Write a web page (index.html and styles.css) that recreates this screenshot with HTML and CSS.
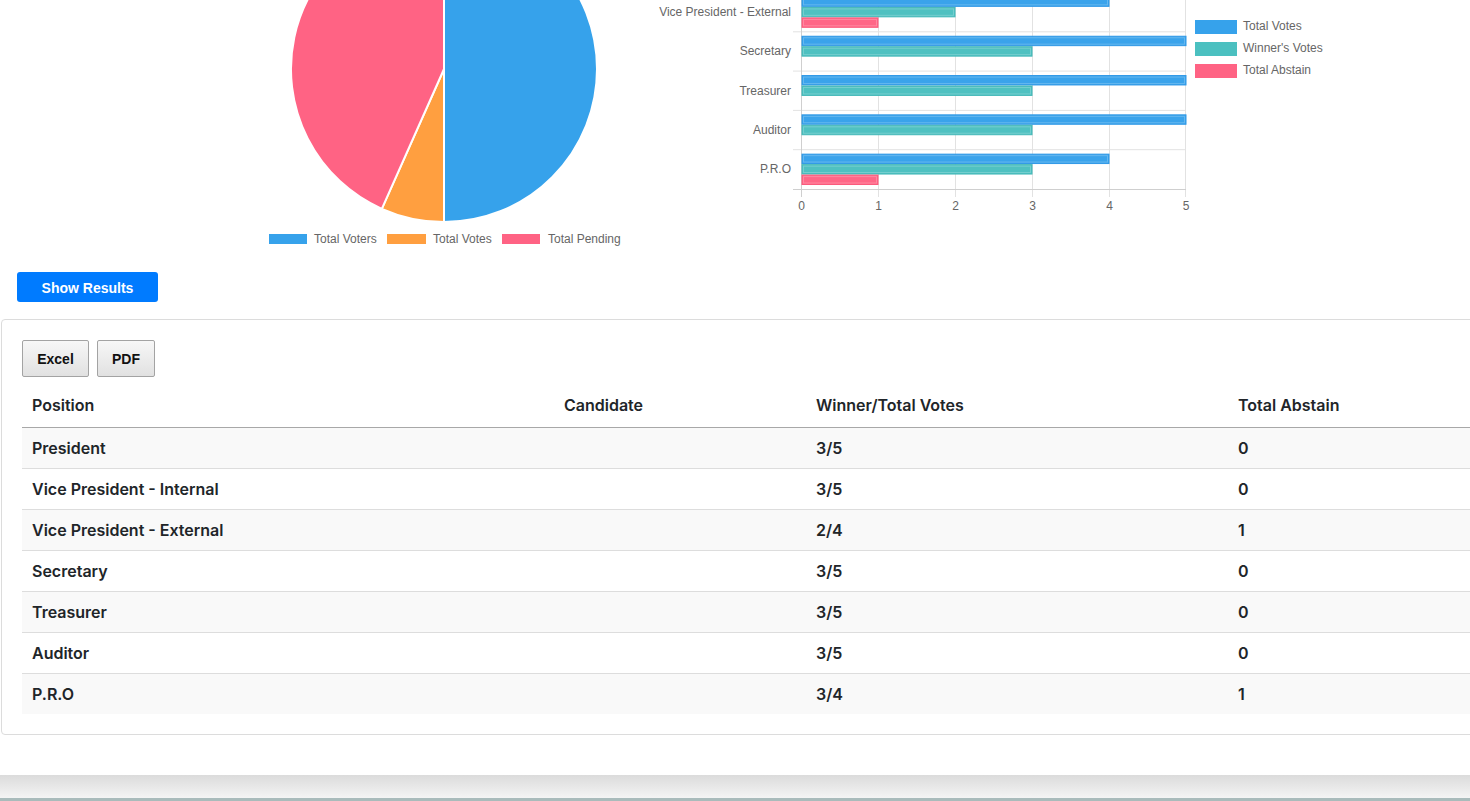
FILE: index.html
```html
<!DOCTYPE html>
<html lang="en">
<head>
<meta charset="utf-8">
<title>Election Results</title>
<link rel="stylesheet" href="styles.css">
</head>
<body>
<div class="page">
  <section class="charts">
    <svg class="pie-chart" width="620" height="350" viewBox="17 -100 620 350">
      <path class="slice slice-voters" d="M444,69 L444,-84 A153,153 0 0 1 444,222 Z"/>
      <path class="slice slice-votes" d="M444,69 L444,222 A153,153 0 0 1 381.8,208.8 Z"/>
      <path class="slice slice-pending" d="M444,69 L381.8,208.8 A153,153 0 0 1 444,-84 Z"/>
      <rect class="swatch-voters" x="269" y="234" width="38" height="10"/>
      <text class="chart-text" x="314" y="239">Total Voters</text>
      <rect class="swatch-votes" x="387" y="234" width="39" height="10"/>
      <text class="chart-text" x="433" y="239">Total Votes</text>
      <rect class="swatch-pending" x="502" y="234" width="38" height="10"/>
      <text class="chart-text" x="548" y="239">Total Pending</text>
    </svg>
    <svg class="bar-chart" width="833" height="350" viewBox="637 -100 833 350">
      <g class="grid">
        <line x1="793" y1="-86.1" x2="1186" y2="-86.1"/>
        <line x1="793" y1="-46.8" x2="1186" y2="-46.8"/>
        <line x1="793" y1="-7.5" x2="1186" y2="-7.5"/>
        <line x1="793" y1="31.8" x2="1186" y2="31.8"/>
        <line x1="793" y1="71.1" x2="1186" y2="71.1"/>
        <line x1="793" y1="110.4" x2="1186" y2="110.4"/>
        <line x1="793" y1="149.7" x2="1186" y2="149.7"/>
        <line x1="878.5" y1="-86.1" x2="878.5" y2="197"/>
        <line x1="955.5" y1="-86.1" x2="955.5" y2="197"/>
        <line x1="1032.5" y1="-86.1" x2="1032.5" y2="197"/>
        <line x1="1109.5" y1="-86.1" x2="1109.5" y2="197"/>
        <line x1="1185.5" y1="-86.1" x2="1185.5" y2="197"/>
      </g>
      <g class="axis">
        <line x1="801.5" y1="-86.1" x2="801.5" y2="197"/>
        <line x1="793" y1="189.5" x2="1186" y2="189.5"/>
      </g>
      <g class="bars">
        <rect class="bar-votes" x="802" y="-81.65" width="384" height="9.4"/>
        <rect class="bar-winner" x="802" y="-71.17" width="230" height="9.4"/>

        <rect class="bar-votes" x="802" y="-42.35" width="384" height="9.4"/>
        <rect class="bar-winner" x="802" y="-31.87" width="230" height="9.4"/>

        <rect class="bar-votes" x="802" y="-3.05" width="307" height="9.4"/>
        <rect class="bar-winner" x="802" y="7.43" width="153" height="9.4"/>
        <rect class="bar-abstain" x="802" y="17.91" width="76" height="9.4"/>

        <rect class="bar-votes" x="802" y="36.25" width="384" height="9.4"/>
        <rect class="bar-winner" x="802" y="46.73" width="230" height="9.4"/>

        <rect class="bar-votes" x="802" y="75.55" width="384" height="9.4"/>
        <rect class="bar-winner" x="802" y="86.03" width="230" height="9.4"/>

        <rect class="bar-votes" x="802" y="114.85" width="384" height="9.4"/>
        <rect class="bar-winner" x="802" y="125.33" width="230" height="9.4"/>

        <rect class="bar-votes" x="802" y="154.15" width="307" height="9.4"/>
        <rect class="bar-winner" x="802" y="164.63" width="230" height="9.4"/>
        <rect class="bar-abstain" x="802" y="175.11" width="76" height="9.4"/>
      </g>
      <g class="bar-shine">
        <rect x="803.5" y="-1.55" width="304" height="6.4"/>
        <rect x="803.5" y="8.93" width="150" height="6.4"/>
        <rect x="803.5" y="19.41" width="73" height="6.4"/>
        <rect x="803.5" y="37.75" width="381" height="6.4"/>
        <rect x="803.5" y="48.23" width="227" height="6.4"/>
        <rect x="803.5" y="77.05" width="381" height="6.4"/>
        <rect x="803.5" y="87.53" width="227" height="6.4"/>
        <rect x="803.5" y="116.35" width="381" height="6.4"/>
        <rect x="803.5" y="126.83" width="227" height="6.4"/>
        <rect x="803.5" y="155.65" width="304" height="6.4"/>
        <rect x="803.5" y="166.13" width="227" height="6.4"/>
        <rect x="803.5" y="176.61" width="73" height="6.4"/>
      </g>
      <g class="chart-text cat-labels">
        <text x="791" y="12.15">Vice President - External</text>
        <text x="791" y="51.45">Secretary</text>
        <text x="791" y="90.75">Treasurer</text>
        <text x="791" y="130.05">Auditor</text>
        <text x="791" y="169.35">P.R.O</text>
      </g>
      <g class="chart-text tick-labels">
        <text x="801.5" y="206">0</text>
        <text x="878.5" y="206">1</text>
        <text x="955.5" y="206">2</text>
        <text x="1032.5" y="206">3</text>
        <text x="1109.5" y="206">4</text>
        <text x="1186" y="206">5</text>
      </g>
      <rect class="swatch-votes-bar" x="1195" y="20" width="42" height="14"/>
      <text class="chart-text" x="1243" y="25.5">Total Votes</text>
      <rect class="swatch-winner" x="1195" y="42" width="42" height="14"/>
      <text class="chart-text" x="1243" y="47.5">Winner's Votes</text>
      <rect class="swatch-abstain" x="1195" y="64" width="42" height="14"/>
      <text class="chart-text" x="1243" y="69.5">Total Abstain</text>
    </svg>
  </section>

  <div class="actions">
    <button class="btn-primary" type="button">Show Results</button>
  </div>

  <div class="card">
    <div class="dt-buttons">
      <button class="dt-btn dt-excel" type="button">Excel</button>
      <button class="dt-btn dt-pdf" type="button">PDF</button>
    </div>
    <table class="results">
      <thead>
        <tr>
          <th class="col-pos">Position</th>
          <th class="col-cand">Candidate</th>
          <th class="col-votes">Winner/Total Votes</th>
          <th class="col-abs">Total Abstain</th>
        </tr>
      </thead>
      <tbody>
        <tr><td>President</td><td></td><td>3/5</td><td>0</td></tr>
        <tr><td>Vice President - Internal</td><td></td><td>3/5</td><td>0</td></tr>
        <tr><td>Vice President - External</td><td></td><td>2/4</td><td>1</td></tr>
        <tr><td>Secretary</td><td></td><td>3/5</td><td>0</td></tr>
        <tr><td>Treasurer</td><td></td><td>3/5</td><td>0</td></tr>
        <tr><td>Auditor</td><td></td><td>3/5</td><td>0</td></tr>
        <tr><td>P.R.O</td><td></td><td>3/4</td><td>1</td></tr>
      </tbody>
    </table>
  </div>
</div>
<div class="footer-shade"></div>
<div class="footer-line"></div>
</body>
</html>
```

FILE: styles.css
```css
html, body {
  margin: 0;
  padding: 0;
  overflow: hidden;
  background: #ffffff;
}

body {
  width: 1470px;
  height: 801px;
  font-family: "Liberation Sans", Arial, sans-serif;
}

.page {
  background: #ffffff;
  padding-bottom: 40px;
}

.charts {
  display: flex;
  margin-top: -100px;
  padding-left: 17px;
  height: 350px;
}

.charts svg {
  display: block;
  flex-shrink: 0;
}

.chart-text {
  font-family: "Liberation Sans", Arial, sans-serif;
  font-size: 12px;
  fill: #666666;
  dominant-baseline: central;
}

.cat-labels text {
  text-anchor: end;
}

.tick-labels text {
  text-anchor: middle;
}

.slice {
  stroke: #ffffff;
  stroke-width: 2;
  stroke-linejoin: round;
}

.slice-voters, .swatch-voters { fill: #36a2eb; }
.slice-votes, .swatch-votes { fill: #ff9f40; }
.slice-pending, .swatch-pending { fill: #ff6384; }

.swatch-votes-bar { fill: #36a2eb; }
.swatch-winner { fill: #4bc0c0; }
.swatch-abstain { fill: #ff6384; }

.grid line {
  stroke: #e2e2e2;
  stroke-width: 1;
}

.axis line {
  stroke: #cfcfcf;
  stroke-width: 1;
}

.bars rect {
  stroke-width: 1;
}

.bar-votes { fill: #3aa3eb; stroke: #2f98e6; }
.bar-winner { fill: #4fc1c1; stroke: #45b8b8; }
.bar-abstain { fill: #ff6787; stroke: #fb5a7c; }

.bar-shine rect {
  fill: none;
  stroke: rgba(255, 255, 255, 0.22);
  stroke-width: 1;
}

.actions {
  padding-left: 17px;
  margin-top: 22px;
}

.btn-primary {
  display: block;
  width: 141px;
  height: 30px;
  border: none;
  border-radius: 3px;
  background: #007bff;
  color: #ffffff;
  font-family: "Liberation Sans", Arial, sans-serif;
  font-weight: 700;
  font-size: 14px;
  padding: 2px 0 0;
}

.card {
  margin: 17px 0 0 1px;
  width: 1520px;
  border: 1px solid #dcdcdc;
  border-radius: 4px;
  padding: 20px;
  background: #ffffff;
}

.dt-buttons {
  display: flex;
  gap: 8px;
  margin-bottom: 7px;
}

.dt-btn {
  height: 37px;
  padding: 0;
  border: 1px solid #a3a3a3;
  border-radius: 2px;
  background: linear-gradient(#f7f7f7, #e1e1e1);
  color: #111111;
  font-family: "Liberation Sans", Arial, sans-serif;
  font-weight: 700;
  font-size: 14px;
}

.dt-excel { width: 67px; }
.dt-pdf { width: 58px; }

.results {
  width: 100%;
  border-collapse: collapse;
  table-layout: fixed;
  font-family: Inter, "Noto Sans", sans-serif;
  font-weight: 600;
  font-size: 16px;
  color: #212529;
}

.results th {
  text-align: left;
  padding: 10px 10px 11px;
  line-height: 22px;
  border-bottom: 1px solid #a8a8a8;
  font-weight: 600;
}

.results td {
  padding: 9px 10px;
  line-height: 22px;
  border-top: 1px solid #dddddd;
}

.results tbody tr:nth-child(odd) {
  background: #f9f9f9;
}

.col-pos { width: 512px; }
.col-cand { width: 232px; }
.col-votes { width: 402px; }
.col-abs { width: auto; }

.footer-shade {
  height: 23px;
  background: linear-gradient(#dbdbdb, #f4f4f4);
}

.footer-line {
  height: 3px;
  background: #a9bbbb;
}
```
